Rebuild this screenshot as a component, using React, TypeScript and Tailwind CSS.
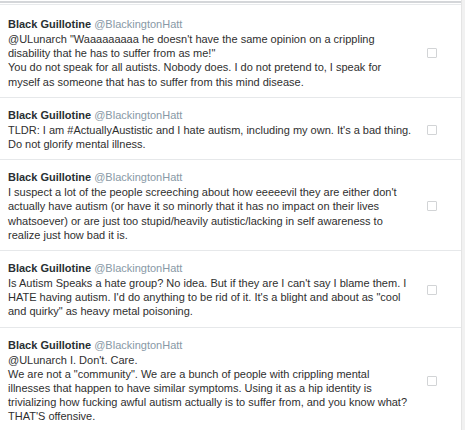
const tweets = [
  {
    lines: [
      '@ULunarch "Waaaaaaaaa he doesn\'t have the same opinion on a crippling disability that he has to suffer from as me!"',
      'You do not speak for all autists. Nobody does. I do not pretend to, I speak for myself as someone that has to suffer from this mind disease.',
    ],
  },
  {
    lines: [
      "TLDR: I am #ActuallyAustistic and I hate autism, including my own. It's a bad thing. Do not glorify mental illness.",
    ],
  },
  {
    lines: [
      "I suspect a lot of the people screeching about how eeeeevil they are either don't actually have autism (or have it so minorly that it has no impact on their lives whatsoever) or are just too stupid/heavily autistic/lacking in self awareness to realize just how bad it is.",
    ],
  },
  {
    lines: [
      'Is Autism Speaks a hate group? No idea. But if they are I can\'t say I blame them. I HATE having autism. I\'d do anything to be rid of it. It\'s a blight and about as "cool and quirky" as heavy metal poisoning.',
    ],
  },
  {
    lines: [
      "@ULunarch I. Don't. Care.",
      'We are not a "community". We are a bunch of people with crippling mental illnesses that happen to have similar symptoms. Using it as a hip identity is trivializing how fucking awful autism actually is to suffer from, and you know what? THAT\'S offensive.',
    ],
  },
];

export default function App() {
  return (
    <div className="flex h-[430px] w-[465px] overflow-hidden bg-white font-['Liberation_Sans',Arial,sans-serif]">
      <div className="flex-1">
        <div className="mt-[1px] h-[2px] bg-[#d4d6d9]" />
        <div className="h-[1px] bg-white" />
        <div className="h-[1px] bg-[#e8eaec]" />
        {tweets.map((t, i) => (
          <div
            key={i}
            className={`flex items-center border-b border-[#e6e8ea] pl-2 pr-[24px] ${
              i === 0 ? 'pt-[12px] pb-[8px]' : 'pt-[10px] pb-[8px]'
            }`}
          >
            <div className="w-[406px] text-[11px] text-[#2f2f2f]">
              <div className="leading-[15px]">
                <span className="font-bold text-[#292f33]">Black Guillotine</span>{' '}
                <span className="text-[#8899a6]">@BlackingtonHatt</span>
              </div>
              {t.lines.map((l, j) => (
                <p key={j} className="leading-[14.2px]">
                  {l}
                </p>
              ))}
            </div>
            <div className="ml-auto h-[10px] w-[10px] rounded-[1px] border border-[#d2d4d6] bg-white" />
          </div>
        ))}
      </div>
      <div className="w-[4px] border-l border-[#e4e4e4] bg-[#f1f1f1]" />
    </div>
  );
}
